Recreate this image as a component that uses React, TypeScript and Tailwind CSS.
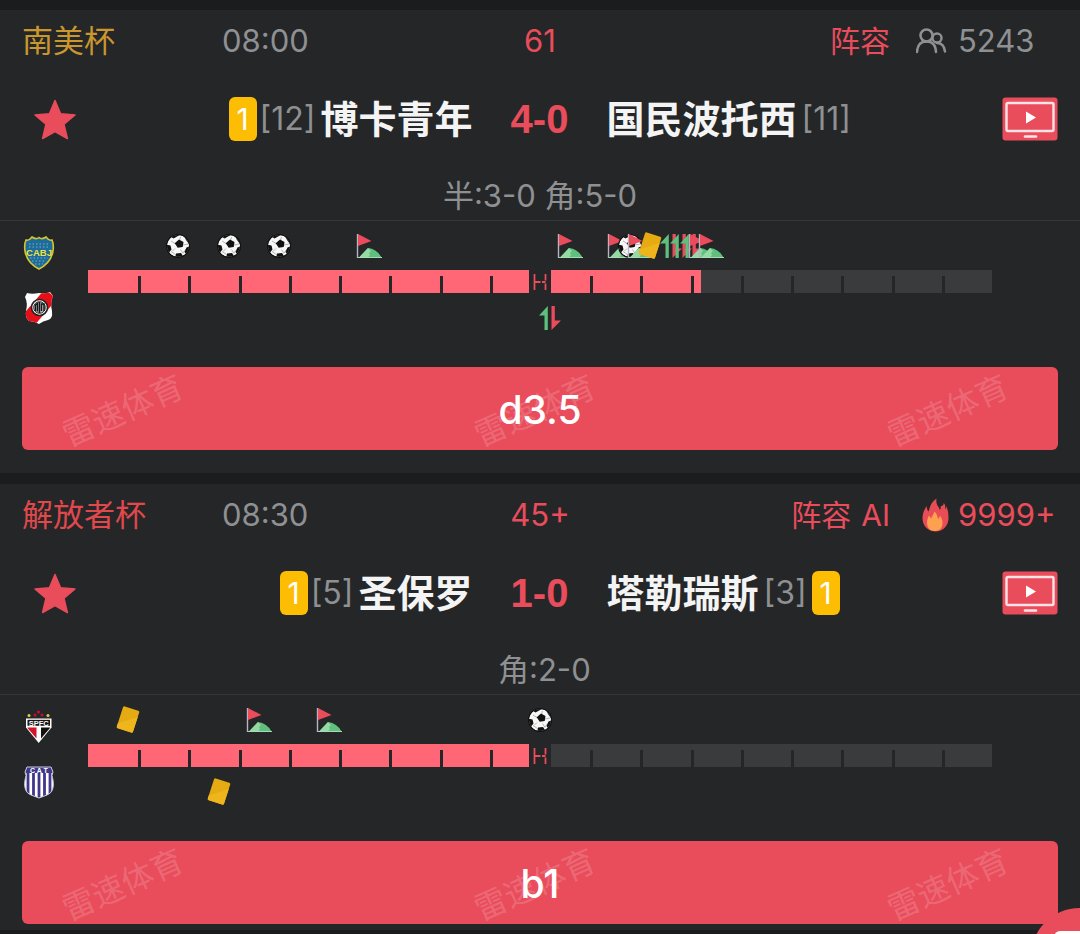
import type { ReactNode } from "react";

type EventKind = "goal" | "corner" | "card" | "sub";
type MatchEvent = { minute: number; kind: EventKind };
type Team = { name: string; rank: number; cards?: number };
type Match = {
  league: string;
  leagueColor: string;
  time: string;
  clock: string;
  tags: string[];
  viewers: string;
  hot: boolean;
  home: Team;
  away: Team;
  score: string;
  detail: string;
  played: number;
  crests: [ReactNode, ReactNode];
  homeEvents: MatchEvent[];
  awayEvents: MatchEvent[];
  tip: string;
};

function BocaCrest() {
  return (
    <svg viewBox="0 0 32 34" className="h-[34px] w-8" aria-hidden="true">
      <path
        d="M3 4 Q6 5 9 1 Q13 4 16 1.500 Q19 4 23 1 Q26 5 29 4 Q31 8 30 15 Q28 27 16 33 Q4 27 2 15 Q1 8 3 4Z"
        fill="#1d6c9c"
        stroke="#d5c630"
        strokeWidth="1.6"
      />
      <path
        d="M6 8h20M6 11h20M7 22h18M9 25h14M12 28h8"
        stroke="#7db2b8"
        strokeWidth="1"
        strokeDasharray="1.500 2"
      />
      <text x="16" y="19.500" textAnchor="middle" fontSize="9.500" fontWeight="700" fontFamily="Liberation Sans, sans-serif" fill="#f0e33c">
        CABJ
      </text>
    </svg>
  );
}

function PotosiCrest() {
  return (
    <svg viewBox="0 0 32 34" className="h-[34px] w-8" aria-hidden="true">
      <clipPath id="potosi-shield">
        <path d="M4 2 Q9 3.500 16 2 Q23 3 27 1 L30 5 Q27 12 29 20 Q30 28 25 29 Q20 30 16 33 Q11 30 6 30 Q2 27 3 20 Q5 12 2 6Z" />
      </clipPath>
      <g clipPath="url(#potosi-shield)">
        <rect width="32" height="34" fill="#fff" />
        <path d="M22 -2 L34 8 L10 36 L-2 26Z" fill="#e60f18" />
      </g>
      <circle cx="16.500" cy="16.500" r="8" fill="#fff" stroke="#222" strokeWidth="1.600" />
      <circle cx="16.500" cy="16.500" r="5.800" fill="#bbb" stroke="#222" />
      <path d="M12.500 20v-6l2-1.500v8M16.500 11v11M18.500 20v-7h2.500v7" fill="none" stroke="#161616" strokeWidth="1.400" />
    </svg>
  );
}

function SaoPauloCrest() {
  return (
    <svg viewBox="0 0 32 34" className="h-[34px] w-8" aria-hidden="true">
      <circle cx="6" cy="5.500" r="1.500" fill="#e5cf3c" />
      <circle cx="25" cy="5.500" r="1.500" fill="#e5cf3c" />
      <circle cx="12" cy="5" r="1.500" fill="#c8102e" />
      <circle cx="19" cy="5" r="1.500" fill="#c8102e" />
      <circle cx="15.500" cy="2" r="1.500" fill="#c8102e" />
      <path d="M3 8.500h25.500v9L15.700 33 3 17.500Z" fill="#fff" />
      <path d="M4.500 9.800h22.500v6H4.500Z" fill="#161616" />
      <path d="M4.500 17.500h9v11L4.500 18Z" fill="#d3122c" />
      <path d="M18 17.500h9v.5L18 28.500Z" fill="#111" />
      <text x="15.700" y="15.500" textAnchor="middle" fontSize="7.500" fontWeight="700" fontFamily="Liberation Sans, sans-serif" fill="#fff">
        SPFC
      </text>
    </svg>
  );
}

function TalleresCrest() {
  return (
    <svg viewBox="0 0 32 34" className="h-[34px] w-8" aria-hidden="true">
      <clipPath id="talleres-shield">
        <path d="M4 2h24l2 5q-2 3 0 8q2 12-6 15l-8 3-8-3Q0 27 2 15q2-5 0-8Z" />
      </clipPath>
      <g clipPath="url(#talleres-shield)">
        <rect width="32" height="34" fill="#fff" />
        <path d="M5 8v26M10.500 8v26M16 8v26M21.500 8v26M27 8v26" stroke="#40378a" strokeWidth="2.800" />
        <rect width="32" height="8" fill="#40378a" />
      </g>
      <path
        d="M4 2h24l2 5q-2 3 0 8q2 12-6 15l-8 3-8-3Q0 27 2 15q2-5 0-8Z"
        fill="none"
        stroke="#c9c7dd"
      />
      <text x="16" y="7.800" textAnchor="middle" fontSize="7" fontWeight="700" fontFamily="Liberation Sans, sans-serif" fill="#fff">
        C A T
      </text>
    </svg>
  );
}

function BallIcon() {
  return (
    <svg viewBox="0 0 24 24" className="size-6" aria-hidden="true">
      <clipPath id="ball-outline">
        <circle cx="12" cy="12" r="11" />
      </clipPath>
      <circle cx="12" cy="12" r="12" fill="#111" />
      <g clipPath="url(#ball-outline)">
        <circle cx="12" cy="12" r="11" fill="#f7f7f7" />
        <path
          d="M13 8.500L14.500 3M17 11l5-1M14.500 15.500l2.500 4M9 14.500l-3 3M9 9.500L5 7M5 17.500l4.500 3M17 19l3.500-4.500"
          stroke="#a5a5a5"
          strokeWidth=".8"
        />
        <path d="M13 5.500l4.500 2.500-.8 5-5 .8-3-4.500Z" fill="#111" />
        <path d="M5 3l5-3h6l-4 2-4.500 2.500ZM0 10.500l4.500 1 1 4-2.500 3L0 17ZM10 19.500l5-.5 2 3-2 3H9ZM20.500 13.500l3.500-1.500v6l-4 2-1.500-2ZM18 2l5 4v4l-3-4Z" fill="#111" />
      </g>
    </svg>
  );
}

function CornerIcon() {
  return (
    <svg viewBox="0 0 26 26" className="size-[26px]" aria-hidden="true">
      <path d="M3 24.500L12 15q9 1 13.500 9.500Z" fill="#5fbf7c" />
      <path d="M3 24.500L12 15l3 3-2 2 1 2-2 2.500Z" fill="#95d9a5" />
      <path d="M2 24.500h24" stroke="#a9dcb5" strokeWidth="1" />
      <path d="M1.500 1v24" stroke="#b9b4c4" strokeWidth="1.400" />
      <path d="M2 1l13.500 7L2 13Z" fill="#ea4c5c" />
    </svg>
  );
}

function CardIcon() {
  return (
    <svg viewBox="0 0 26 28" className="h-7 w-[26px]" aria-hidden="true">
      <g transform="rotate(18 13 13.500)">
        <rect x="4.500" y="2" width="17" height="23" rx="1.500" fill="#e6ab12" />
        <path d="M4.500 20.500L21.500 8v15.500q0 1.500-1.500 1.500h-14Q4.500 25 4.500 23.500Z" fill="#efb51d" />
      </g>
    </svg>
  );
}

function SubIcon() {
  return (
    <svg viewBox="0 0 24 24" className="size-6" aria-hidden="true">
      <path d="M9.800 0v24H6.500V9.500H1Z" fill="#5fbf7c" />
      <path d="M13.500 24V0h3.300v14.500H23Z" fill="#ea4c5c" />
    </svg>
  );
}

function StarIcon() {
  return (
    <svg viewBox="0 0 44 44" className="size-11" aria-hidden="true">
      <path
        d="M22 3.500l5.600 13.200 14.400 1.200-11 9.400 3.400 14.200L22 34.700 9.600 41.500 12.900 27.300 2 17.900l14.400-1.200Z"
        fill="#e94c5b"
        stroke="#e94c5b"
        strokeWidth="1.500"
        strokeLinejoin="round"
      />
    </svg>
  );
}

function TvIcon() {
  return (
    <svg viewBox="0 0 56 44" className="h-11 w-14" aria-hidden="true">
      <rect x=".5" y=".5" width="55" height="43" rx="3" fill="#e94c5b" />
      <rect x="4.500" y="6" width="47" height="28" rx="1.500" fill="none" stroke="#ffe3e6" strokeWidth="2.400" />
      <path d="M24 14.500l10 6-10 6Z" fill="#fff" />
      <path d="M23 39.500h11" stroke="#ffe3e6" strokeWidth="2.600" strokeLinecap="round" />
    </svg>
  );
}

function ViewersIcon() {
  return (
    <svg viewBox="0 0 32 32" className="size-8" fill="none" stroke="#8f9092" strokeWidth="2.500" strokeLinecap="round" aria-hidden="true">
      <circle cx="10.500" cy="9.500" r="6" />
      <path d="M1 26q.5-10.500 9.500-10.500T20 26" />
      <circle cx="21" cy="12" r="4.500" />
      <path d="M21 17q7 0 8 8.500" />
    </svg>
  );
}

function FlameIcon() {
  return (
    <svg viewBox="-5 1 36 36" className="-my-1 size-9" aria-hidden="true">
      <path
        d="M14 34.500C6 34 1.500 28 1.500 21c0-5 2-8.500 4-12 .3 2.500.8 4 2 5.500C9.500 9 9.500 6 15.500 1.500c-.5 3.500 0 6 2 8.500.8 1 1.200 2 1.200 3 1-1 1.300-2 1-4 1.800.3 3-.6 3-3 2 2 1.500 4 1.500 6.500 .8-1 1-2 .8-3.500 1.800 3 2.500 7 2.500 12 0 7.500-5 13.500-13.500 13.500Z"
        fill="#e94c55"
      />
      <path
        d="M14 34c-5 0-8-3.500-8-8.500 0-3 1-5 2-7 .8 1 1.200 2.200 2.200 3 .8-2.500 2.300-4 3.300-7 2.200 2 2.800 4.500 3.700 7.500 1-.8 1.500-1.800 1.800-3.500 1.200 2 2.500 4 2.500 7 0 5-2.500 8.500-7.500 8.500Z"
        fill="#fda050"
      />
    </svg>
  );
}

function HalfTimeIcon() {
  return (
    <svg viewBox="0 0 14 16" className="h-4 w-3.5" fill="none" stroke="#e94c5b" strokeWidth="1.800" aria-hidden="true">
      <path d="M1.500 0v16M12.500 0v6.500M12.500 9.500V16M1.500 8h6M9 8h3.500" />
    </svg>
  );
}

const eventIcons: Record<EventKind, () => ReactNode> = {
  goal: BallIcon,
  corner: CornerIcon,
  card: CardIcon,
  sub: SubIcon,
};

function EventRow({ events }: { events: MatchEvent[] }) {
  return (
    <div className="relative h-[49px]">
      {events.map((event) => {
        const Icon = eventIcons[event.kind];
        return (
          <span
            key={`${event.kind}-${event.minute}`}
            className="absolute top-1/2 -translate-x-1/2 -translate-y-1/2"
            style={{ left: `${(event.minute / 90) * 100}%` }}
          >
            <Icon />
          </span>
        );
      })}
    </div>
  );
}

function Timeline({ match }: { match: Match }) {
  return (
    <div className="flex border-t border-[#35373a] pr-[88px]">
      <div className="flex w-[88px] shrink-0 flex-col items-start gap-[21px] pt-[15px] pl-[23px]">
        {match.crests[0]}
        {match.crests[1]}
      </div>
      <div className="min-w-0 flex-1">
        <EventRow events={match.homeEvents} />
        <div className="relative h-[23px] bg-[#3a3b3d]">
          <div className="h-full bg-[#ff6776]" style={{ width: `${(match.played / 90) * 100}%` }} />
          <div className="absolute inset-0 grid grid-cols-18 pt-1.5">
            {Array.from({ length: 18 }, (_, i) => (
              <span key={i} className={i === 17 ? "" : "-mr-[3px] border-r-[3px] border-[#242628]"} />
            ))}
          </div>
          <div className="absolute inset-y-0 left-1/2 flex w-[22px] -translate-x-1/2 items-center justify-center bg-[#242628]">
            <HalfTimeIcon />
          </div>
        </div>
        <EventRow events={match.awayEvents} />
      </div>
    </div>
  );
}

function YellowCards({ count }: { count?: number }) {
  if (!count) return null;
  return (
    <span className="flex h-11 w-7 items-center justify-center rounded-md bg-[#fdbd02] text-[30px] text-white">
      {count}
    </span>
  );
}

function Rank({ value }: { value: number }) {
  return <span className="text-[32px] text-[#8f9092]">[{value}]</span>;
}

function MatchCard({ match }: { match: Match }) {
  return (
    <article className="bg-[#242628]">
      <header className="grid h-[62px] grid-cols-[1fr_auto_1fr] items-center px-[22px] pt-px text-[31px] text-[#8f9092]">
        <div className="flex">
          <span className={`w-[200px] ${match.leagueColor}`}>{match.league}</span>
          <time>{match.time}</time>
        </div>
        <span className="text-[#e94c5b]">{match.clock}</span>
        <div className="flex items-center justify-end gap-[26px]">
          <a href="#lineup" className="flex gap-2.5 text-[30px] text-[#e94c5b]">
            {match.tags.map((tag) => (
              <span key={tag}>{tag}</span>
            ))}
          </a>
          <div className={`flex w-[142px] items-center ${match.hot ? "text-[#e94c5b]" : ""}`}>
            <span className="flex w-[42px] shrink-0">{match.hot ? <FlameIcon /> : <ViewersIcon />}</span>
            <span>{match.viewers}</span>
          </div>
        </div>
      </header>

      <div className="flex h-[94px] items-center pr-[22px] pl-[33px]">
        <button type="button" aria-label="收藏" className="w-11">
          <StarIcon />
        </button>
        <div className="grid flex-1 grid-cols-[1fr_134px_1fr] items-center">
          <div className="flex items-center justify-end gap-[5px]">
            <div className="flex items-center gap-[3px]">
              <YellowCards count={match.home.cards} />
              <Rank value={match.home.rank} />
            </div>
            <h2 className="text-[38px] font-bold text-[#f4f4f4]">{match.home.name}</h2>
          </div>
          <strong className="text-center font-['Liberation_Sans',sans-serif] text-[40px] font-bold text-[#e94c5b]">
            {match.score}
          </strong>
          <div className="flex items-center gap-[5px]">
            <h2 className="text-[38px] font-bold text-[#f4f4f4]">{match.away.name}</h2>
            <Rank value={match.away.rank} />
            <YellowCards count={match.away.cards} />
          </div>
        </div>
        <button type="button" aria-label="视频直播" className="w-14">
          <TvIcon />
        </button>
      </div>

      <p className="mt-1.5 text-center text-[31px] leading-[48px] text-[#8f9092]">{match.detail}</p>

      <Timeline match={match} />

      <div className="px-[22px] pt-[25px]">
        <button type="button" className="relative block h-[83px] w-full rounded-md bg-[#e94c5b] pt-[3px] text-[39px] font-medium text-white">
          <span aria-hidden="true" className="absolute inset-0 flex items-center justify-between pt-1 pr-[46px] pl-[37px] text-[32px] leading-none font-normal text-white/18">
            <span className="-rotate-24">雷速体育</span>
            <span className="-rotate-24">雷速体育</span>
            <span className="-rotate-24">雷速体育</span>
          </span>
          <span className="relative">{match.tip}</span>
        </button>
      </div>
    </article>
  );
}

const matches: Match[] = [
  {
    league: "南美杯",
    leagueColor: "text-[#c9972e]",
    time: "08:00",
    clock: "61",
    tags: ["阵容"],
    viewers: "5243",
    hot: false,
    home: { name: "博卡青年", rank: 12, cards: 1 },
    away: { name: "国民波托西", rank: 11 },
    score: "4-0",
    detail: "半:3-0 角:5-0",
    played: 61,
    crests: [<BocaCrest key="home" />, <PotosiCrest key="away" />],
    homeEvents: [
      { minute: 9, kind: "goal" },
      { minute: 14, kind: "goal" },
      { minute: 19, kind: "goal" },
      { minute: 28, kind: "corner" },
      { minute: 48, kind: "corner" },
      { minute: 53, kind: "corner" },
      { minute: 54, kind: "goal" },
      { minute: 55, kind: "corner" },
      { minute: 56, kind: "card" },
      { minute: 58, kind: "sub" },
      { minute: 59, kind: "sub" },
      { minute: 60, kind: "sub" },
      { minute: 61, kind: "corner" },
      { minute: 62, kind: "corner" },
    ],
    awayEvents: [{ minute: 46, kind: "sub" }],
    tip: "d3.5",
  },
  {
    league: "解放者杯",
    leagueColor: "text-[#e0484c]",
    time: "08:30",
    clock: "45+",
    tags: ["阵容", "AI"],
    viewers: "9999+",
    hot: true,
    home: { name: "圣保罗", rank: 5, cards: 1 },
    away: { name: "塔勒瑞斯", rank: 3, cards: 1 },
    score: "1-0",
    detail: "\u00a0角:2-0",
    played: 45,
    crests: [<SaoPauloCrest key="home" />, <TalleresCrest key="away" />],
    homeEvents: [
      { minute: 4, kind: "card" },
      { minute: 17, kind: "corner" },
      { minute: 24, kind: "corner" },
      { minute: 45, kind: "goal" },
    ],
    awayEvents: [{ minute: 13, kind: "card" }],
    tip: "b1",
  },
];

export default function App() {
  return (
    <div className="min-h-screen bg-[#1b1c1e] font-['Inter','Noto_Sans_CJK_SC',sans-serif] whitespace-nowrap">
      <main className="flex flex-col pt-2.5">
        <div className="bg-[#242628] pb-[23px]">
          <MatchCard match={matches[0]} />
        </div>
        <div className="mt-[11px] bg-[#242628] pb-1.5">
          <MatchCard match={matches[1]} />
        </div>
      </main>
      <button
        type="button"
        aria-label="更多"
        className="fixed -right-12 -bottom-[71px] flex size-[97px] items-center justify-center rounded-full bg-[#e94c5b]"
      >
        <span className="size-[52px] rounded-md bg-white" />
      </button>
    </div>
  );
}
